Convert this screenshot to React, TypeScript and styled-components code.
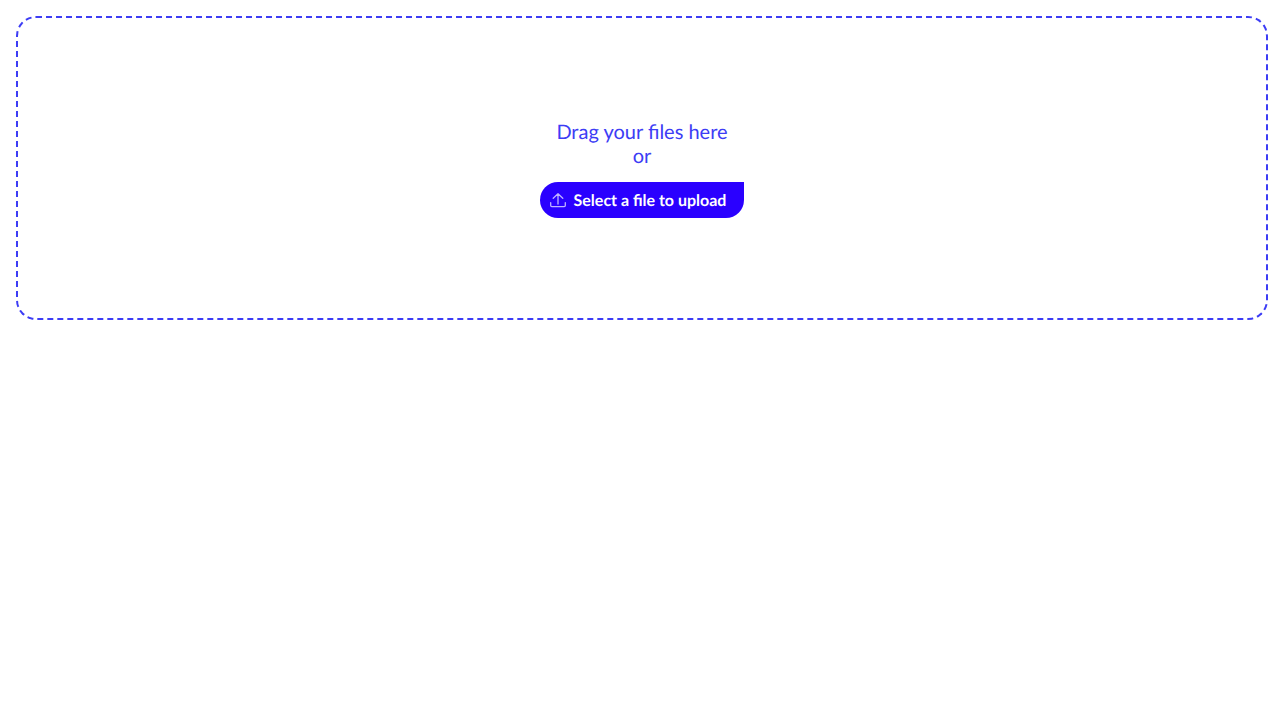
import React, { useRef } from "react";
import styled, { createGlobalStyle } from "styled-components";

const GlobalStyle = createGlobalStyle`
  *, *::before, *::after { box-sizing: border-box; }
  body {
    margin: 0;
    background: #ffffff;
    font-family: Lato, "Liberation Sans", sans-serif;
    text-rendering: geometricPrecision;
  }
`;

const Page = styled.main`
  padding: 16px 12px 16px 16px;
`;

const DropZone = styled.section`
  display: flex;
  flex-direction: column;
  align-items: center;
  justify-content: center;
  gap: 14px;
  min-height: 304px;
  padding-top: 2px;
  border: 2px dashed #3d3df5;
  border-radius: 20px;
`;

const Hint = styled.p`
  margin: 0;
  color: #3d3df5;
  font-size: 20px;
  line-height: 24px;
  text-align: center;
`;

const HintLine = styled.span`
  display: block;
`;

const UploadButton = styled.button`
  display: inline-flex;
  align-items: center;
  gap: 8px;
  height: 36px;
  padding: 0 18px 0 10px;
  border: 0;
  border-radius: 18px 0 18px 18px;
  background: #2a00ff;
  color: #ffffff;
  font: inherit;
  font-size: 16px;
  font-weight: 700;
  line-height: 24px;
  text-rendering: inherit;
  cursor: pointer;
`;

const ButtonLabel = styled.span`
  padding-top: 2px;
`;

const UploadIcon = styled.svg`
  flex: none;
  width: 16px;
  height: 16px;
`;

export default function App() {
  const fileInput = useRef<HTMLInputElement>(null);

  return (
    <>
      <GlobalStyle />
      <Page>
        <DropZone aria-label="File upload">
          <Hint>
            <HintLine>Drag your files here</HintLine>
            <HintLine>or</HintLine>
          </Hint>
          <UploadButton type="button" onClick={() => fileInput.current?.click()}>
            <UploadIcon
              viewBox="0 0 16 16"
              fill="none"
              stroke="currentColor"
              strokeWidth="1.3"
              strokeOpacity="0.7"
              strokeLinecap="round"
              strokeLinejoin="round"
              aria-hidden="true"
            >
              <path d="M8 12V1.7M3.2 6.3L8 1.7L12.8 6.3" />
              <path d="M0.7 10.6V13.5Q0.7 14.6 1.8 14.6H14.2Q15.3 14.6 15.3 13.5V10.6" />
            </UploadIcon>
            <ButtonLabel>Select a file to upload</ButtonLabel>
          </UploadButton>
          <input ref={fileInput} type="file" aria-label="File" hidden />
        </DropZone>
      </Page>
    </>
  );
}
